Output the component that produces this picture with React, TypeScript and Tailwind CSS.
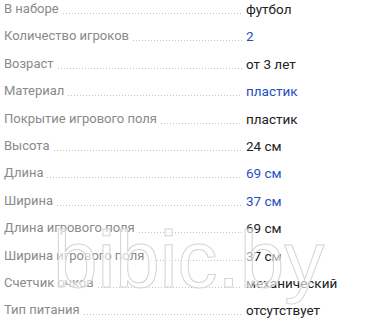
const rows: { label: string; value: string; link?: boolean }[] = [
  { label: "В наборе", value: "футбол" },
  { label: "Количество игроков", value: "2", link: true },
  { label: "Возраст", value: "от 3 лет" },
  { label: "Материал", value: "пластик", link: true },
  { label: "Покрытие игрового поля", value: "пластик" },
  { label: "Высота", value: "24 см" },
  { label: "Длина", value: "69 см", link: true },
  { label: "Ширина", value: "37 см", link: true },
  { label: "Длина игрового поля", value: "69 см" },
  { label: "Ширина игрового поля", value: "37 см" },
  { label: "Счетчик очков", value: "механический" },
  { label: "Тип питания", value: "отсутствует" },
];

export default function App() {
  return (
    <div className="relative w-[369px] h-[330px] overflow-hidden bg-white font-['Roboto',sans-serif] leading-[18px]">
      {rows.map((r) => (
        <div key={r.label} className="flex h-[27.4px]">
          <div className="flex w-[242px] shrink-0 pl-1">
            <span className="text-[13px] text-[#8a8a8a] whitespace-nowrap">{r.label}</span>
            <div className="flex-1 ml-1 mt-[13px] h-px bg-[linear-gradient(to_right,#c4c4c4_1px,transparent_1px)] bg-[length:3px_1px] bg-repeat-x" />
          </div>
          <span className={`pl-1 text-[13.5px] whitespace-nowrap ${r.link ? "text-[#1f4fc2]" : "text-[#222]"}`}>
            {r.value}
          </span>
        </div>
      ))}

      {/* watermark */}
      <div className="absolute left-[53px] top-[220px] text-[80px] leading-none font-['Liberation_Sans',sans-serif] text-white/60 [-webkit-text-stroke:1px_#d4d4d4] pointer-events-none select-none">
        bibic.by
      </div>
    </div>
  );
}
